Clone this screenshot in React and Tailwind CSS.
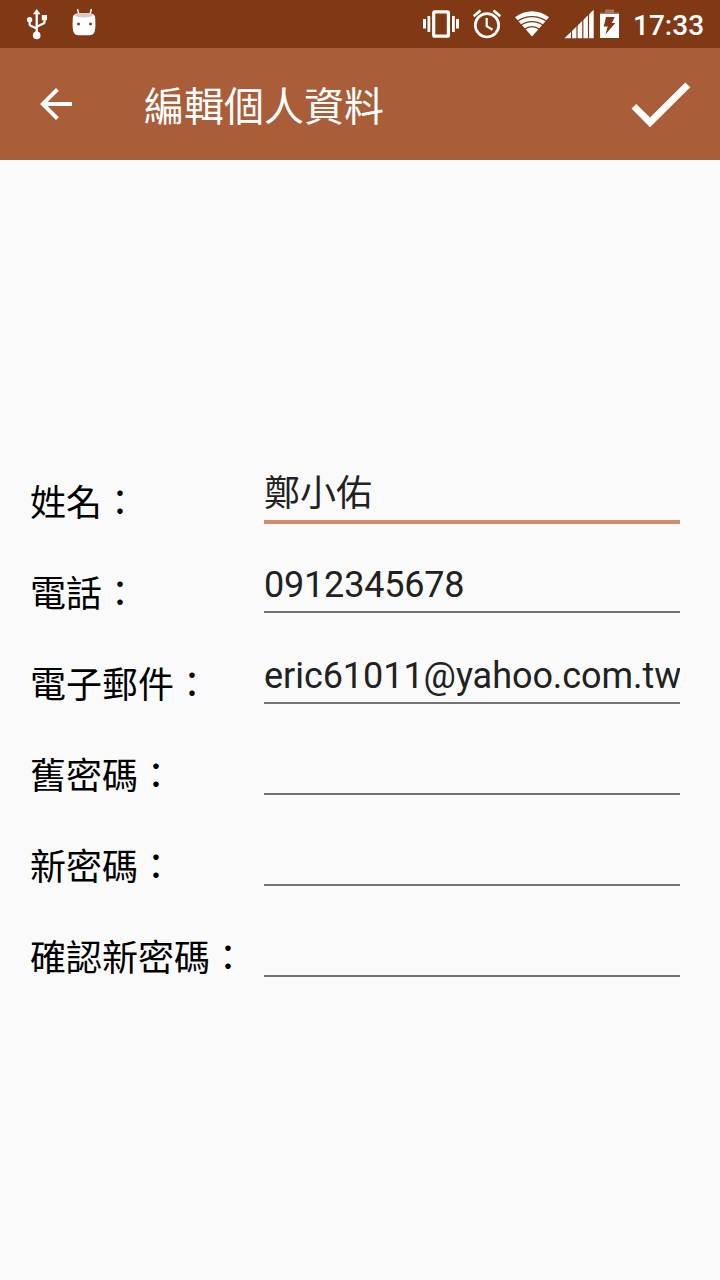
import React from "react";

const fields = [
  { label: "姓名：", value: "鄭小佑", active: true },
  { label: "電話：", value: "0912345678", tracking: "tracking-[-0.2px]" },
  { label: "電子郵件：", value: "eric61011@yahoo.com.tw", tracking: "tracking-[-0.05px]" },
  { label: "舊密碼：", value: "" },
  { label: "新密碼：", value: "" },
  { label: "確認新密碼：", value: "" },
];

function UsbIcon() {
  return (
    <svg className="ml-6 h-12 w-6 shrink-0" viewBox="24 0 24 48" fill="#fff">
      <path d="M36.7 9l3.8 5.2h-7.6z" />
      <path d="M36.7 12v23M29.700 20v4.200q0 1 1 1.500l6 2.800M44.500 19v3q0 1-1 1.500l-6.800 3.300" fill="none" stroke="#fff" strokeWidth="2.300" />
      <circle cx="29.600" cy="19.800" r="2.700" />
      <path d="M41.800 15h5.200v5.200h-5.200z" />
      <circle cx="36.700" cy="35.400" r="3.800" />
    </svg>
  );
}

function RobotIcon() {
  return (
    <svg className="ml-5 h-12 w-8 shrink-0" viewBox="68 0 32 48" fill="#fff">
      <path d="M77.500 9l1.300 5M91.400 9l-1.300 5" stroke="#fff" strokeWidth="1.400" />
      <path d="M72.800 18c0-4 3-5 11.200-5s11.200 1 11.200 5c0 4 .6 8-.2 12-.8 4-2.500 5.300-7 5.300h-8c-4.500 0-6.200-1.300-7-5.300-.8-4-.2-8-.2-12z" />
      <ellipse cx="84" cy="15.200" rx="9.300" ry="2.200" fill="#dcc8bd" />
      <path d="M77.200 22.700h2.600v2.600h-2.600zM89.200 22.700h2.600v2.600h-2.600z" fill="#813815" />
    </svg>
  );
}

function VibrateIcon() {
  return (
    <svg className="h-12 w-10 shrink-0" viewBox="421 0 40 48" fill="#fff">
      <rect x="433.700" y="11.900" width="14.700" height="24.300" rx="1" fill="none" stroke="#fff" strokeWidth="3.200" />
      <path d="M423 19h3v9.500h-3zM427.500 16h2.800v16h-2.800zM452 16h2.800v16h-2.800zM456 19h3v9.500h-3z" />
    </svg>
  );
}

function AlarmIcon() {
  return (
    <svg className="ml-2 h-12 w-9 shrink-0" viewBox="469 0 36 48" fill="none" stroke="#fff" strokeWidth="2.700">
      <circle cx="487" cy="25.300" r="11.700" />
      <path d="M473.700 16.200l6.800-5.700M493.500 10.500l6.800 5.700" />
      <path d="M486.700 18v8.200l5.800 3.500" strokeWidth="2.200" />
    </svg>
  );
}

function WifiIcon() {
  return (
    <svg className="ml-2 h-12 w-9 shrink-0" viewBox="513 0 36 48" fill="none">
      <path d="M532 36.600L515 17.300c10-8 24-8 34 0z" fill="#fff" />
      <path d="M517 21.500c9-6.500 21-6.500 30 0M520.500 25.500c7-5.200 16-5.200 23 0M524 29.500c5-3.600 11-3.600 16 0" stroke="#813815" strokeWidth="1.300" />
    </svg>
  );
}

function SignalIcon() {
  return (
    <svg className="ml-3.5 h-12 w-8 shrink-0" viewBox="563 0 32 48">
      <path d="M564.500 38.200L593.700 9.800v28.400z" fill="#fff" />
      <path d="M571.500 28v11M577 22v17M582.800 17v22M588.500 12v27" stroke="#813815" strokeWidth="1.200" />
    </svg>
  );
}

function BatteryIcon() {
  return (
    <svg className="ml-0.5 h-12 w-6 shrink-0" viewBox="597 0 24 48">
      <path d="M605 9.500h9v3h5V14h-19v-1.500h5z" fill="#a87660" />
      <path d="M600 14h19v24h-19z" fill="#fff" />
      <path d="M606 17h8.800l-3 6h3.600l-10 11.600 2.300-8.200h-4z" fill="#813815" />
    </svg>
  );
}

function Field({ label, value, active, tracking = "" }) {
  return (
    <div className="flex h-[91px] items-end">
      <div className="h-10 w-[234px] shrink-0 whitespace-nowrap text-[36px] leading-10 text-black">{label}</div>
      <div className={active ? "h-[56px] w-[416px] border-b-4 border-[#d48b6b]" : "mb-0.5 h-[54px] w-[416px] border-b-2 border-[#737373]"}>
        <div className={`h-[52px] overflow-hidden whitespace-nowrap text-[36px] leading-[52px] text-[#212121] ${tracking}`}>{value}</div>
      </div>
    </div>
  );
}

export default function App() {
  return (
    <div className="flex h-[1280px] w-[720px] flex-col overflow-hidden bg-[#fafafa] font-[Roboto,'Noto_Sans_CJK_TC',sans-serif]">
      <div className="flex h-12 shrink-0 items-center bg-[#813815]">
        <UsbIcon />
        <RobotIcon />
        <div className="ml-auto flex items-center pr-4">
          <VibrateIcon />
          <AlarmIcon />
          <WifiIcon />
          <SignalIcon />
          <BatteryIcon />
          <div className="ml-3 w-[71px] whitespace-nowrap pt-1 text-[28px] leading-[46px] font-medium text-white">17:33</div>
        </div>
      </div>
      <header className="flex h-28 shrink-0 items-center bg-[#a95d39] pl-8 text-white">
        <svg className="size-12 shrink-0" viewBox="0 0 24 24" fill="currentColor">
          <path d="M20 11H7.830l5.590-5.590L12 4l-8 8 8 8 1.410-1.410L7.830 13H20v-2z" />
        </svg>
        <h1 className="ml-16 pt-2 text-[40px] leading-[48px] font-normal">編輯個人資料</h1>
        <svg className="mr-7 ml-auto h-12 w-16 shrink-0" viewBox="628 80 64 48" fill="currentColor">
          <path d="M631.500 108.500l4.700-4.600L650 117.600l35.300-35.200 4.900 4.900L650 127.200z" />
        </svg>
      </header>
      <main className="px-[30px] pt-[273px]">
        {fields.map((field) => (
          <Field key={field.label} {...field} />
        ))}
      </main>
    </div>
  );
}
